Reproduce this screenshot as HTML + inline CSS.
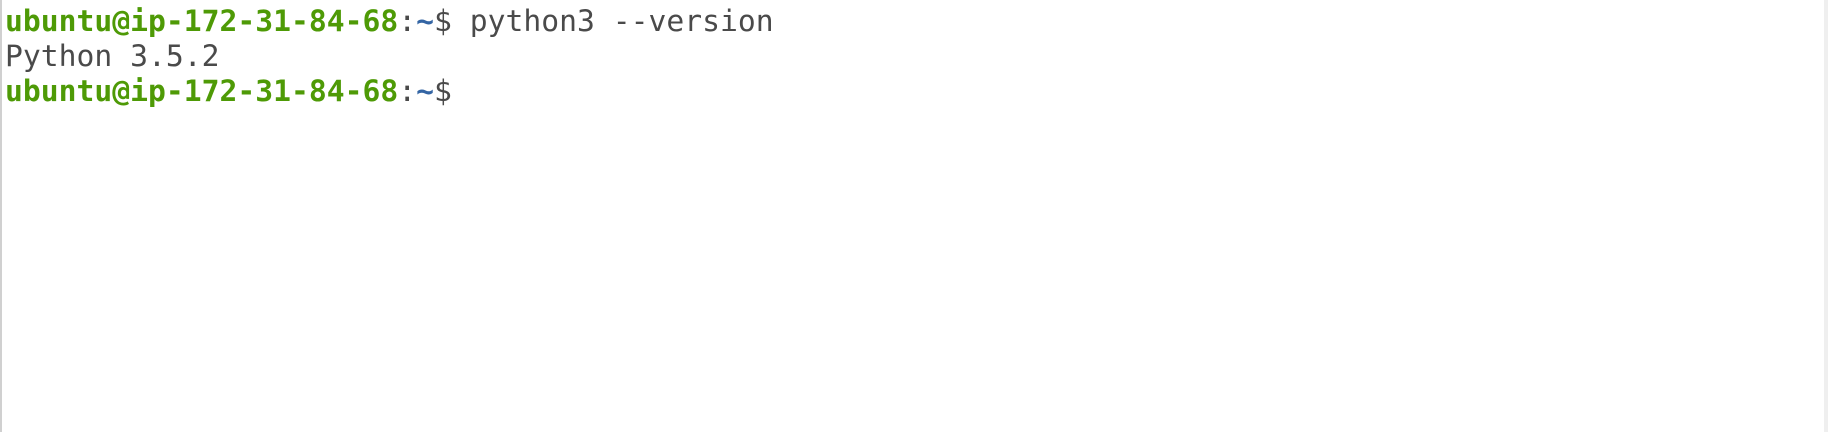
<!DOCTYPE html>
<html><head><style>
html,body{margin:0;padding:0;background:#fff;}
body{width:1828px;height:432px;overflow:hidden;position:relative;}
.l{position:absolute;left:0;top:0;width:2px;height:432px;background:#d0d0d0;}
.r{position:absolute;right:0;top:0;width:4px;height:432px;background:#efefef;}
pre{position:absolute;left:5px;top:4px;margin:0;font-family:"DejaVu Sans Mono","Liberation Mono",monospace;font-size:29.7px;line-height:35px;color:#4a4a4a;}
.g{color:#4e9a06;font-weight:bold;}
.b{color:#3465a4;font-weight:bold;}
</style></head><body>
<div class="l"></div><div class="r"></div>
<pre><span class="g">ubuntu@ip-172-31-84-68</span>:<span class="b">~</span>$ python3 --version
Python 3.5.2
<span class="g">ubuntu@ip-172-31-84-68</span>:<span class="b">~</span>$ </pre>
</body></html>
